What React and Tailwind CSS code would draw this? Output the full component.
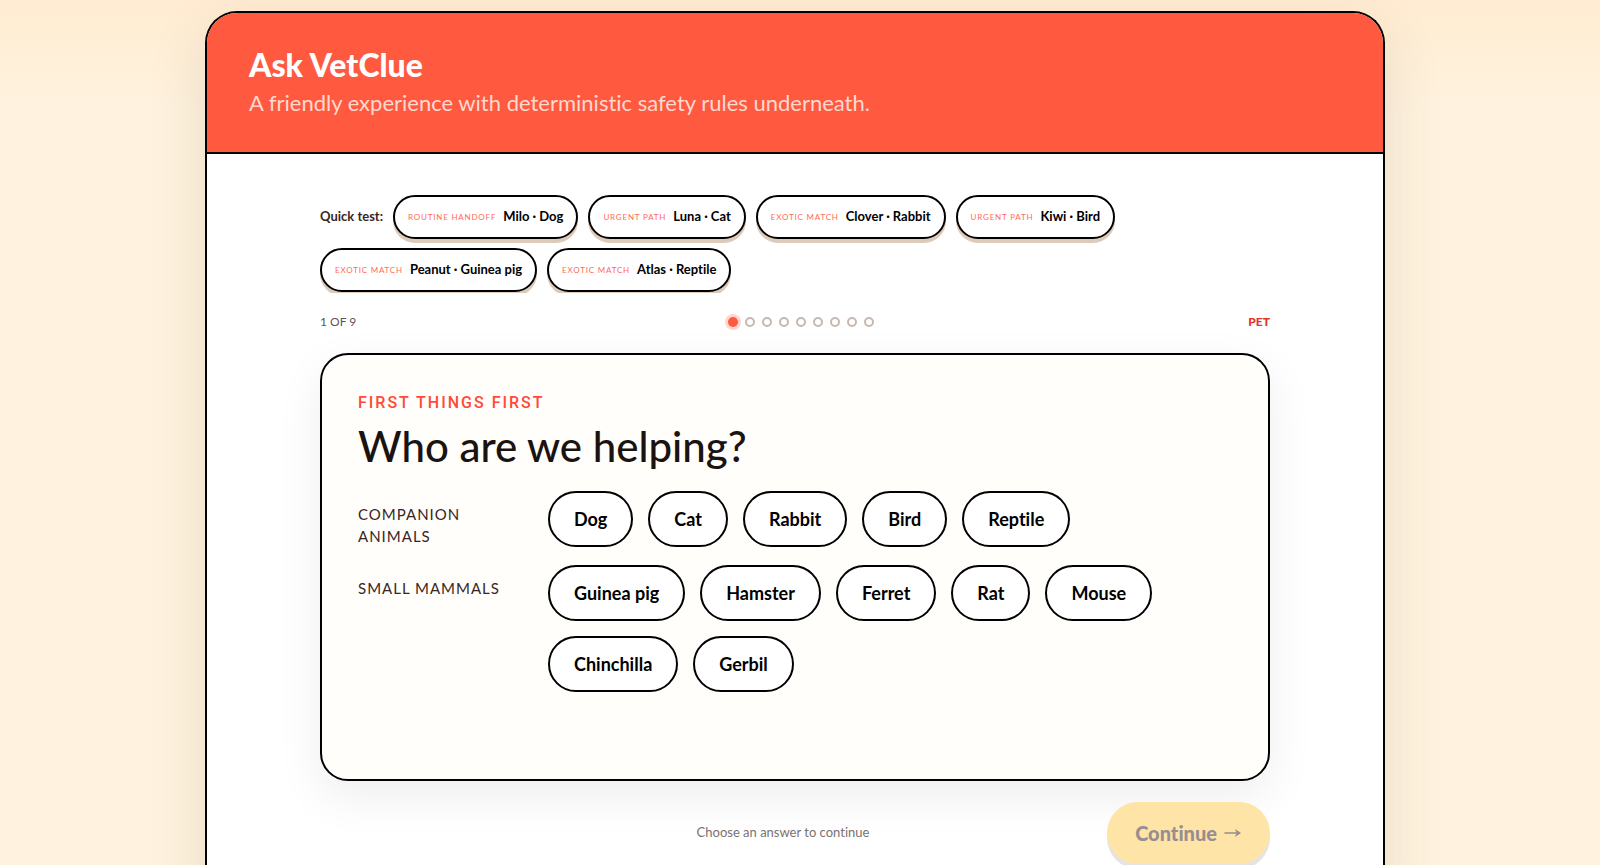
import React, { useState } from "react";

const presets = [
  { tag: "Routine handoff", label: "Milo · Dog" },
  { tag: "Urgent path", label: "Luna · Cat" },
  { tag: "Exotic match", label: "Clover · Rabbit" },
  { tag: "Urgent path", label: "Kiwi · Bird" },
  { tag: "Exotic match", label: "Peanut · Guinea pig" },
  { tag: "Exotic match", label: "Atlas · Reptile" },
];

const groups = [
  { name: "Companion animals", pets: ["Dog", "Cat", "Rabbit", "Bird", "Reptile"] },
  {
    name: "Small mammals",
    pets: ["Guinea pig", "Hamster", "Ferret", "Rat", "Mouse", "Chinchilla", "Gerbil"],
  },
];

const TOTAL_STEPS = 9;

function PresetPill({ tag, label }) {
  return (
    <button className="flex h-11 items-center gap-[7px] rounded-full border-2 border-black bg-white px-[13px] shadow-[0_4px_0_#dccbbb]">
      <span className="text-[8px] uppercase tracking-[0.8px] text-[#ff6a58]">{tag}</span>
      <span className="text-[13px] font-bold text-black">{label}</span>
    </button>
  );
}

function Progress({ step }) {
  return (
    <div className="mt-[19px] mb-[21px] grid grid-cols-3 items-center text-xs leading-5">
      <span className="uppercase text-[#5f5352]">
        {step} of {TOTAL_STEPS}
      </span>
      <div className="flex items-center justify-center gap-[7px] pl-3">
        {Array.from({ length: TOTAL_STEPS }, (_, i) => (
          <span
            key={i}
            className={
              i + 1 === step
                ? "size-[10px] rounded-full bg-[#ff5a3f] ring-3 ring-[#ffd6cf]"
                : "size-[10px] rounded-full border-2 border-[#c6b8ae] bg-white"
            }
          />
        ))}
      </div>
      <span className="text-right font-black uppercase text-[#e5322b]">Pet</span>
    </div>
  );
}

export default function App() {
  const [pet, setPet] = useState(null);

  return (
    <div className="min-h-screen overflow-hidden bg-[#fff3df] bg-[linear-gradient(#ffecd2,#fff3df_110px)] pt-[11px] pr-[26px] pl-4 font-['Lato',sans-serif] [font-variant-ligatures:none]">
      <div className="mx-auto max-w-[1180px] overflow-hidden rounded-t-[32px] border-2 border-b-0 border-black bg-white shadow-[0_20px_60px_rgba(70,55,30,0.13)]">
        <header className="border-b-2 border-black bg-[#ff5a3f] px-[42px] pt-[34px] pb-[31px]">
          <h1 className="mb-[2px] text-[32px] leading-9 font-black text-white">Ask VetClue</h1>
          <p className="text-[22px] leading-9 text-[#ffd9cf]">
            A friendly experience with deterministic safety rules underneath.
          </p>
        </header>

        <main className="mx-auto max-w-[950px] pt-[41px] pb-10">
          <div className="-mx-1 flex flex-wrap items-center gap-x-[10px] gap-y-[9px] overflow-hidden px-1 pb-px">
            <span className="text-[13px] font-bold text-[#3a2523]">Quick test:</span>
            {presets.map((p) => (
              <PresetPill key={p.label} tag={p.tag} label={p.label} />
            ))}
          </div>

          <Progress step={1} />

          <section className="min-h-[428px] rounded-[28px] border-2 border-black bg-[#fffefa] px-9 pt-9 pb-9 shadow-[0_16px_48px_rgba(0,0,0,0.07)]">
            <p className="font-['Roboto',sans-serif] text-base leading-6 font-medium uppercase tracking-[2px] text-[#ff4a38]">
              First things first
            </p>
            <h2 className="mt-[5px] mb-[19px] text-[42px] leading-[52px] font-medium text-[#1a1311]">
              Who are we helping?
            </h2>

            <div className="flex flex-col gap-[18px]">
              {groups.map((g) => (
                <div key={g.name} className="grid grid-cols-[150px_1fr] gap-10">
                  <h3 className="pt-3 text-[15px] leading-[22px] uppercase tracking-[1px] text-[#3a2523]">
                    {g.name}
                  </h3>
                  <div className="flex flex-wrap gap-[15px]">
                    {g.pets.map((name) => (
                      <button
                        key={name}
                        onClick={() => setPet(name)}
                        aria-pressed={pet === name}
                        className="h-14 rounded-full border-2 border-black bg-white px-6 text-lg font-bold text-black"
                      >
                        {name}
                      </button>
                    ))}
                  </div>
                </div>
              ))}
            </div>
          </section>

          <div className="mt-[21px] grid grid-cols-3 items-center">
            <span />
            <p className="pr-6 text-center text-[13px] text-[#7b7170]">
              Choose an answer to continue
            </p>
            <button
              disabled={!pet}
              className="flex h-[62px] items-center gap-[7px] justify-self-end rounded-full bg-[#ffe4a8] px-7 text-xl font-black text-[#998e8f] shadow-[0_5px_0_#e4e4e4]"
            >
              Continue
              <svg width="18" height="12" viewBox="0 0 18 12" aria-hidden="true">
                <path d="M1 6h13" stroke="currentColor" strokeWidth="1.6" strokeLinecap="round" />
                <path d="M11 2l6 4-6 4 1.5-4z" fill="currentColor" />
              </svg>
            </button>
          </div>
        </main>
      </div>
    </div>
  );
}
